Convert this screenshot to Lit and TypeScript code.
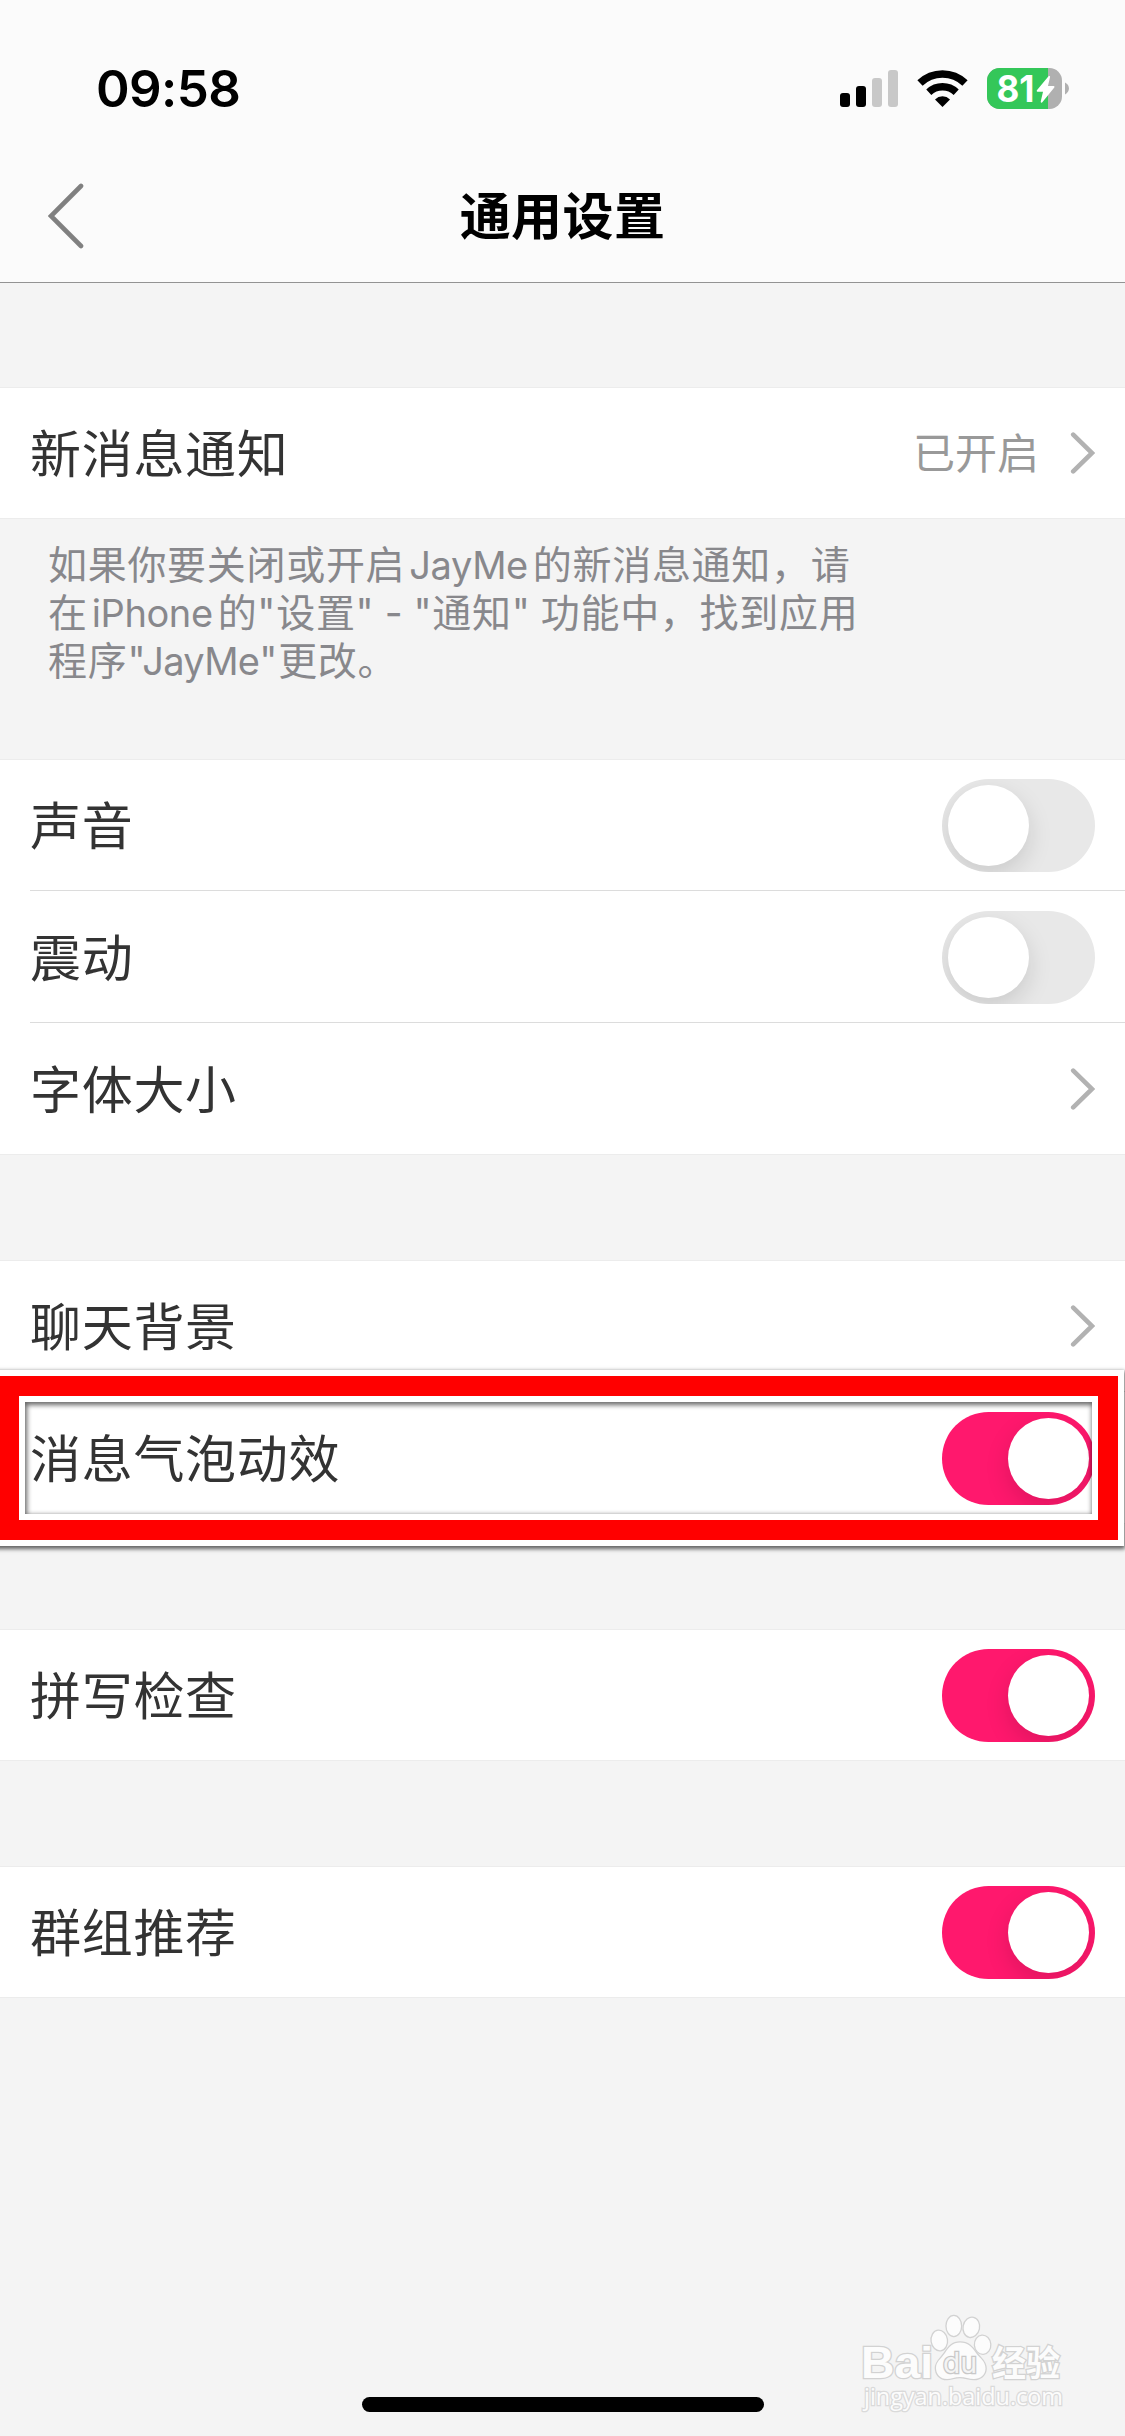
import { LitElement, html, css, svg, nothing } from "lit";
import { customElement, property } from "lit/decorators.js";
import { classMap } from "lit/directives/class-map.js";

type Row = { label: string; kind: "link" | "switch"; value?: string; on?: boolean; marked?: boolean };
type Group = { rows: Row[]; note?: unknown[] };

const word = (t: string, tight = false) => html`<span class=${classMap({ word: true, tight })}>${t}</span>`;

const GROUPS: Group[] = [
  {
    rows: [{ label: "新消息通知", kind: "link", value: "已开启" }],
    note: [
      html`如果你要关闭或开启${word("JayMe")}的新消息通知，请`,
      html`在${word("iPhone")}的"设置" - "通知" 功能中，找到应用`,
      html`程序"${word("JayMe", true)}"更改。`,
    ],
  },
  {
    rows: [
      { label: "声音", kind: "switch", on: false },
      { label: "震动", kind: "switch", on: false },
      { label: "字体大小", kind: "link" },
    ],
  },
  {
    rows: [
      { label: "聊天背景", kind: "link" },
      { label: "消息气泡动效", kind: "switch", on: true, marked: true },
    ],
  },
  { rows: [{ label: "拼写检查", kind: "switch", on: true }] },
  { rows: [{ label: "群组推荐", kind: "switch", on: true }] },
];

@customElement("toggle-switch")
export class ToggleSwitch extends LitElement {
  @property({ type: Boolean }) on = false;

  static styles = css`
    :host {
      display: block;
      flex: none;
    }
    .track {
      box-sizing: border-box;
      display: flex;
      width: 153px;
      height: 93px;
      padding: 6px;
      border-radius: 47px;
      background: #e8e8e8;
      overflow: hidden;
    }
    .track.on {
      justify-content: flex-end;
      background: #ff186d;
    }
    .knob {
      width: 81px;
      height: 81px;
      border-radius: 50%;
      background: #fff;
      box-shadow: 0 9px 24px rgba(0, 0, 0, 0.13);
    }
  `;

  render() {
    return html`<div class=${classMap({ track: true, on: this.on })}><div class="knob"></div></div>`;
  }
}

@customElement("status-bar")
export class StatusBar extends LitElement {
  static styles = css`
    :host {
      display: block;
    }
    .bar {
      box-sizing: border-box;
      display: flex;
      justify-content: space-between;
      height: 132px;
      padding: 58px 56px 0 96px;
    }
    .time {
      height: 62px;
      font: 600 51px/62px Inter, sans-serif;
      letter-spacing: -0.6px;
      color: #000;
    }
    .icons {
      display: flex;
      align-items: flex-start;
      padding-top: 10px;
    }
    .signal,
    .wifi {
      margin-right: 19px;
    }
    .battery {
      overflow: visible;
    }
    .percent {
      font: 700 37px Inter, sans-serif;
      fill: #fff;
    }
  `;

  render() {
    return html`
      <div class="bar">
        <div class="time">09:58</div>
        <div class="icons">
          <svg class="signal" width="58" height="41" viewBox="0 0 58 41">
            <rect x="0" y="25" width="10" height="14" rx="3" />
            <rect x="16" y="18" width="10" height="21" rx="3" />
            <rect x="32" y="10" width="10" height="29" rx="3" fill="#c8c8c8" />
            <rect x="48" y="2" width="10" height="37" rx="3" fill="#c8c8c8" />
          </svg>
          <svg class="wifi" width="51" height="41" viewBox="0 0 51 41">
            <g fill="none" stroke="#000">
              <path d="M3 15A32.5 32.5 0 0 1 48 15" stroke-width="7.6" />
              <path d="M11.8 24.2A20 20 0 0 1 39.2 24.2" stroke-width="7.4" />
            </g>
            <path d="M25.5 39L18 31.4A10.8 10.8 0 0 1 33 31.4Z" />
          </svg>
          <svg class="battery" width="82" height="41" viewBox="0 0 82 41">
            <clipPath id="body"><rect width="75" height="41" rx="12.5" /></clipPath>
            <g clip-path="url(#body)">
              <rect width="75" height="41" fill="#b0b0b0" />
              <rect width="61" height="41" fill="#34c759" />
            </g>
            <path d="M78 14.6C83.3 17.2 83.3 23.8 78 26.4Z" fill="#b0b0b0" />
            <text class="percent" x="9.5" y="34" textLength="38" lengthAdjust="spacingAndGlyphs">81</text>
            <path
              d="M62.2 8.8L50.6 22.8H57.2L54.6 33.8L66.6 19H59.8Z"
              fill="#fff"
              stroke="#fff"
              stroke-width="1.8"
              stroke-linejoin="round"
            />
          </svg>
        </div>
      </div>
    `;
  }
}

@customElement("settings-row")
export class SettingsRow extends LitElement {
  @property({ attribute: false }) row!: Row;
  @property({ type: Boolean }) last = false;

  static styles = css`
    :host {
      display: block;
    }
    .row {
      position: relative;
      box-sizing: border-box;
      display: flex;
      height: 132px;
      padding-left: 30px;
    }
    .inner {
      box-sizing: border-box;
      display: flex;
      align-items: center;
      flex: 1;
      padding: 1px 30px 0 0;
      border-bottom: 1px solid #dcdcdc;
    }
    .inner.last {
      border-bottom-color: transparent;
    }
    .label {
      flex: 1;
      padding-bottom: 5px;
      font: 400 51px/72px "Noto Sans CJK SC", sans-serif;
      letter-spacing: 0.7px;
      color: #333;
    }
    .value {
      margin-right: 31px;
      padding-bottom: 4px;
      font: 400 42px/60px "Noto Sans CJK SC", sans-serif;
      color: #999;
    }
    .chevron {
      flex: none;
    }
    .frame {
      position: absolute;
      box-sizing: border-box;
      left: -7px;
      top: -22px;
      width: 1131px;
      height: 176px;
      border: 6px solid #fff;
      box-shadow: 0 2px 4px 1px rgba(0, 0, 0, 0.6);
      z-index: 1;
    }
    .band {
      box-sizing: border-box;
      height: 100%;
      border: 20px solid #f00;
    }
    .well {
      box-sizing: border-box;
      display: flex;
      height: 100%;
      border: 6px solid #fff;
    }
    .shade {
      flex: 1;
      box-shadow: inset 1px 2px 5px 1px rgba(0, 0, 0, 0.6);
    }
  `;

  render() {
    const { label, kind, value, on, marked } = this.row;
    return html`
      <div class="row">
        <div class=${classMap({ inner: true, last: this.last })}>
          <div class="label">${label}</div>
          ${value ? html`<div class="value">${value}</div>` : nothing}
          ${kind === "switch"
            ? html`<toggle-switch ?on=${on}></toggle-switch>`
            : html`<svg class="chevron" width="25" height="42" viewBox="0 0 25 42">
                <path d="M3.2 2.6L22 21L3.2 39.4" fill="none" stroke="#b2b2b2" stroke-width="4.6" stroke-linecap="round" />
              </svg>`}
        </div>
        ${marked
          ? html`<div class="frame"><div class="band"><div class="well"><div class="shade"></div></div></div></div>`
          : nothing}
      </div>
    `;
  }
}

@customElement("site-watermark")
export class SiteWatermark extends LitElement {
  static styles = css`
    :host {
      display: block;
    }
    .mark {
      display: block;
    }
    .shape {
      fill: #fcfcfc;
      stroke: #d2d2d2;
      stroke-width: 2.6px;
      paint-order: stroke;
    }
    .brand {
      font: 700 45px "Liberation Sans", sans-serif;
    }
    .inside {
      font: 400 28px Inter, sans-serif;
      fill: #f4f4f4;
      stroke: #c8c8c8;
    }
    .cjk {
      font: 700 35px "Noto Sans CJK SC", sans-serif;
    }
    .url {
      font: 500 24px "Open Sans", sans-serif;
      stroke: #dadada;
    }
  `;

  render() {
    const toes = [
      [99.3, 50.5, 7.6, 9.8, -8],
      [113.8, 36, 7.2, 10, 0],
      [131.3, 37.3, 7.6, 9.6, 12],
      [142.6, 54.7, 7.6, 9, -4],
    ];
    return html`
      <svg class="mark" width="240" height="130" viewBox="0 0 240 130">
        <text class="shape brand" x="21" y="87.500" textLength="72" lengthAdjust="spacingAndGlyphs">Bai</text>
        ${toes.map(
          ([x, y, rx, ry, a]) =>
            svg`<ellipse class="shape" cx=${x} cy=${y} rx=${rx} ry=${ry} transform=${`rotate(${a} ${x} ${y})`} />`
        )}
        <path
          class="shape"
          d="M120 52.5C128 52.5 132 57 136 63C140 68.500 145.500 71 145.500 78.500C145.500 85 140 89 134 89C129 89 125 87 120 87C115 87 111 89 107 89C100 89 96 84 96 78C96 71.500 101 69 105 63C109 57 112.500 52.5 120 52.5Z"
        />
        <text class="shape inside" x="103" y="83" textLength="34">du</text>
        <text class="shape cjk" x="152" y="85.500" textLength="68" lengthAdjust="spacingAndGlyphs">经验</text>
        <text class="shape url" x="24" y="115" textLength="199" lengthAdjust="spacingAndGlyphs">jingyan.baidu.com</text>
      </svg>
    `;
  }
}

@customElement("app-root")
export class AppRoot extends LitElement {
  static styles = css`
    :host {
      display: block;
    }
    .screen {
      position: relative;
      box-sizing: border-box;
      display: flex;
      flex-direction: column;
      width: 1125px;
      height: 2436px;
      overflow: hidden;
      background: #f4f4f4;
    }
    .header {
      box-sizing: border-box;
      height: 283px;
      background: #fbfbfb;
      border-bottom: 1px solid #939393;
    }
    .nav {
      display: grid;
      grid-template-columns: 1fr auto 1fr;
      align-items: center;
      height: 150px;
      padding: 8px 48px 0;
      box-sizing: border-box;
      margin-top: 5px;
    }
    .title {
      margin: 0;
      padding-bottom: 7px;
      font: 700 51px/72px "Noto Sans CJK SC", sans-serif;
      letter-spacing: 0.4px;
      color: #000;
    }
    .back {
      display: block;
    }
    .list {
      display: flex;
      flex-direction: column;
      gap: 105px;
      padding-top: 104px;
      flex: 1;
    }
    .card {
      box-sizing: border-box;
      background: #fff;
      box-shadow: inset 0 1px #ececec, inset 0 -1px #ececec;
    }
    .note {
      height: 135px;
      padding-top: 22px;
      margin-bottom: -22px;
      padding-left: 48px;
      font: 400 39px/48px Inter, "Noto Sans CJK SC", sans-serif;
      letter-spacing: 0.7px;
      word-spacing: -1.5px;
      color: #88888c;
      white-space: nowrap;
    }
    .line {
      height: 48px;
    }
    .word {
      margin: 0 5px 0 4px;
      font-size: 38px;
      letter-spacing: -0.4px;
    }
    .word.tight {
      margin: 0 0 0 -4px;
      letter-spacing: -0.7px;
    }
    .home {
      align-self: center;
      width: 402px;
      height: 15px;
      margin-bottom: 24px;
      border-radius: 8px;
      background: #000;
    }
    .stamp {
      position: absolute;
      left: 840px;
      top: 2290px;
    }
  `;

  render() {
    return html`
      <div class="screen">
        <div class="header">
          <status-bar></status-bar>
          <div class="nav">
            <svg class="back" width="36" height="66" viewBox="0 0 36 66">
              <path d="M33 3L3 33L33 63" fill="none" stroke="#808080" stroke-width="4.6" stroke-linecap="round" />
            </svg>
            <h1 class="title">通用设置</h1>
          </div>
        </div>
        <div class="list">
          ${GROUPS.map(
            (g) => html`<div class="group">
              <div class="card">
                ${g.rows.map(
                  (r, i) => html`<settings-row .row=${r} ?last=${i === g.rows.length - 1}></settings-row>`
                )}
              </div>
              ${g.note
                ? html`<div class="note">${g.note.map((t) => html`<div class="line">${t}</div>`)}</div>`
                : nothing}
            </div>`
          )}
        </div>
        <div class="home"></div>
        <site-watermark class="stamp"></site-watermark>
      </div>
    `;
  }
}
